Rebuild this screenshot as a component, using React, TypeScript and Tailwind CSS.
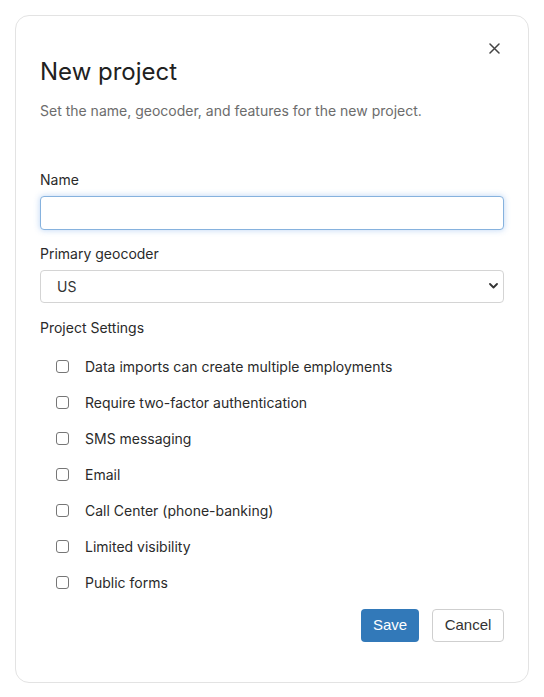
import React from "react";

const settings = [
  "Data imports can create multiple employments",
  "Require two-factor authentication",
  "SMS messaging",
  "Email",
  "Call Center (phone-banking)",
  "Limited visibility",
  "Public forms",
];

export default function App() {
  return (
    <div
      className="min-h-[697px] w-[544px] bg-white pt-[15px] pl-[15px]"
      style={{ fontFamily: "Inter, 'Noto Sans', sans-serif" }}
    >
      <div className="w-[514px] h-[668px] rounded-[14px] border border-[#e3e3e3] bg-white px-6 pt-6 text-[#212529]">
        <div className="flex h-4 justify-end pr-[2px]">
          <button className="flex h-4 w-4 items-center justify-center text-[#444]">
            <svg width="11" height="11" viewBox="0 0 11 11" fill="none" stroke="currentColor" strokeWidth="1.5" strokeLinecap="round">
              <path d="M1 1 L10 10 M10 1 L1 10" />
            </svg>
          </button>
        </div>
        <h2 className="text-[24px] leading-8 font-normal text-[#212121]">New project</h2>
        <p className="mt-[13px] text-[14px] leading-5 text-[#6c6c6c]">
          Set the name, geocoder, and features for the new project.
        </p>

        <label className="mt-[49px] block text-[14px] leading-5 text-[#2a2a2a]">Name</label>
        <input
          className="mt-[6px] block h-[34px] w-[464px] rounded-[4px] border border-[#86b2de] bg-white px-3 text-[15px] outline-none shadow-[0_0_6px_rgba(102,160,230,0.45)]"
          type="text"
        />

        <label className="mt-[14px] block text-[14px] leading-5 text-[#2a2a2a]">Primary geocoder</label>
        <div className="relative mt-[6px] w-[464px]">
          <select className="block h-[33px] w-full appearance-none rounded-[4px] border border-[#d4d4d4] bg-white pl-4 text-[14px] text-[#333] outline-none">
            <option>US</option>
          </select>
          <svg
            className="pointer-events-none absolute right-[6px] top-[13px]"
            width="9"
            height="6"
            viewBox="0 0 9 6"
            fill="none"
            stroke="#333"
            strokeWidth="1.8"
            strokeLinecap="round"
            strokeLinejoin="round"
          >
            <path d="M1 1 L4.5 4.5 L8 1" />
          </svg>
        </div>

        <div className="mt-[15px] text-[14px] leading-5 text-[#2a2a2a]">Project Settings</div>

        <div className="mt-[10px] flex flex-col">
          {settings.map((s) => (
            <label key={s} className="flex h-9 items-center pl-4 text-[14px] text-[#2a2a2a]">
              <span className="block h-[13px] w-[13px] rounded-[3px] border border-[#767676] bg-white" />
              <span className="ml-4">{s}</span>
            </label>
          ))}
        </div>

        <div
          className="mt-[9px] flex justify-end gap-[13px]"
          style={{ fontFamily: "'Liberation Sans', Arial, sans-serif" }}
        >
          <button className="h-[33px] w-[58px] rounded-[4px] bg-[#3279b9] text-[15px] text-white">Save</button>
          <button className="h-[33px] w-[72px] rounded-[4px] border border-[#cfcfcf] bg-white text-[15px] text-[#333]">
            Cancel
          </button>
        </div>
      </div>
    </div>
  );
}
